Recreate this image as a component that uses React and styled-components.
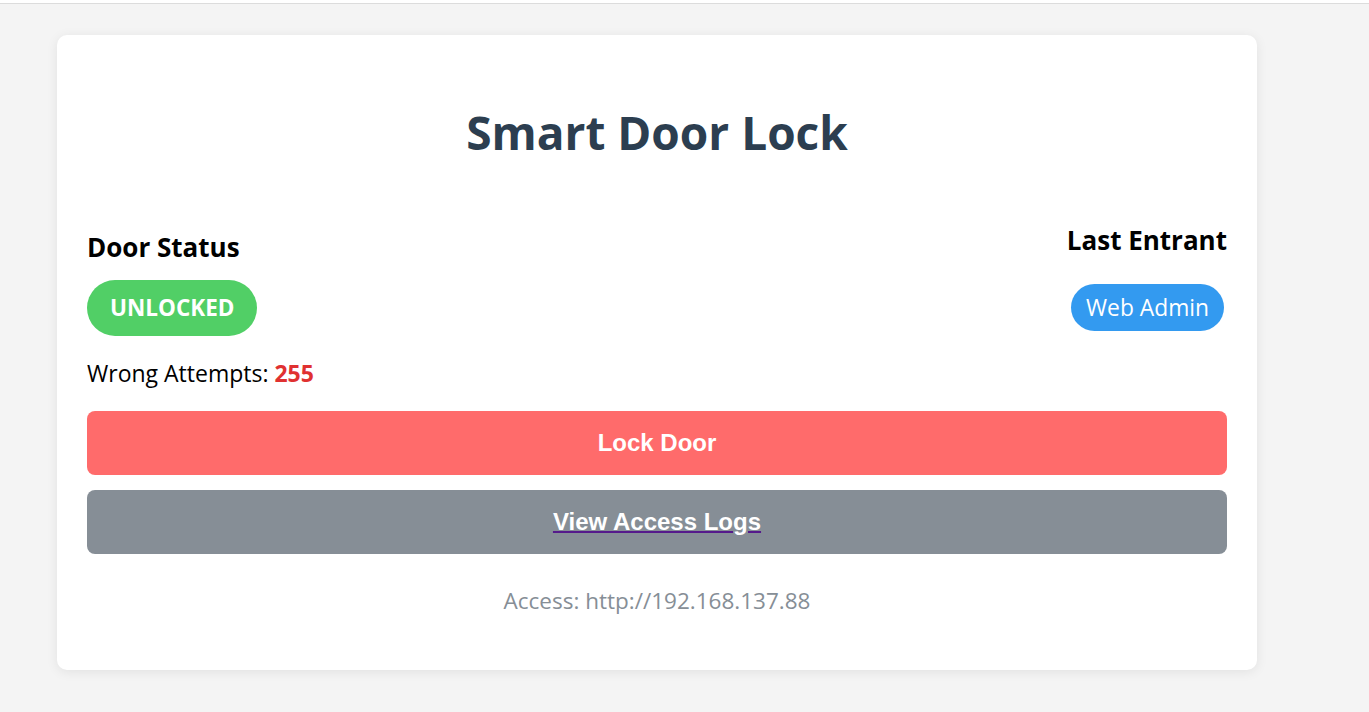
import styled, { createGlobalStyle } from "styled-components";

const GlobalStyle = createGlobalStyle`
  body {
    margin: 0;
    background: #f4f4f4;
    font-family: "Open Sans", "Noto Sans", sans-serif;
  }
`;

const App = () => {
  return (
    <>
      <GlobalStyle />
      <TopBar />
      <Page>
        <Card>
          <Title>Smart Door Lock</Title>
          <StatusRow>
            <Column>
              <Heading>Door Status</Heading>
              <StatusBadge>UNLOCKED</StatusBadge>
              <Attempts>
                Wrong Attempts: <Count>255</Count>
              </Attempts>
            </Column>
            <Column $right>
              <Heading>Last Entrant</Heading>
              <EntrantBadge>Web Admin</EntrantBadge>
            </Column>
          </StatusRow>
          <Button $bg="#ff6b6b">Lock Door</Button>
          <Button $bg="#868e96">
            <LogsLink href="#">View Access Logs</LogsLink>
          </Button>
          <Footer>Access: http://192.168.137.88</Footer>
        </Card>
      </Page>
    </>
  );
};

const TopBar = styled.div`
  height: 3px;
  background: #fff;
  border-bottom: 1px solid #dcdcdc;
`;

const Page = styled.div`
  padding: 31px 0 40px 57px;
`;

const Card = styled.div`
  width: 1200px;
  box-sizing: border-box;
  background: #fff;
  border-radius: 10px;
  padding: 30px 30px 54px;
  box-shadow: 0 2px 12px rgba(0, 0, 0, 0.08);
`;

const Title = styled.h1`
  margin: 35px 0 59px;
  text-align: center;
  color: #2c3e50;
  font-size: 46px;
  line-height: 64px;
  font-weight: 700;
`;

const StatusRow = styled.div`
  display: flex;
  justify-content: space-between;
  align-items: flex-start;
`;

const Column = styled.div`
  display: flex;
  flex-direction: column;
  align-items: ${(p) => (p.$right ? "flex-end" : "flex-start")};
  padding-top: ${(p) => (p.$right ? "0" : "7px")};
`;

const Heading = styled.h3`
  margin: 0;
  font-size: 26px;
  line-height: 34px;
  font-weight: 700;
  color: #000;
`;

const StatusBadge = styled.span`
  margin-top: 16px;
  padding: 13px 23px;
  border-radius: 30px;
  background: #51cf66;
  color: #fff;
  font-size: 22.5px;
  line-height: 30px;
  font-weight: 700;
`;

const EntrantBadge = styled.span`
  margin-top: 27px;
  margin-right: 3px;
  padding: 9px 15px;
  border-radius: 24px;
  background: #339af0;
  color: #fff;
  font-size: 22.8px;
  line-height: 29px;
`;

const Attempts = styled.p`
  margin: 21px 0 22px;
  font-size: 23px;
  line-height: 32px;
  color: #000;
`;

const Count = styled.span`
  color: #e03131;
  font-weight: 700;
`;

const Button = styled.button`
  display: block;
  width: 100%;
  margin-bottom: 15px;
  padding: 20px;
  border: none;
  border-radius: 8px;
  background: ${(p) => p.$bg};
  color: #fff;
  font-family: "Liberation Sans", Arial, sans-serif;
  font-size: 24px;
  line-height: 24px;
  font-weight: 700;
  cursor: pointer;
`;

const LogsLink = styled.a`
  color: #fff;
  text-decoration: underline;
  text-decoration-color: #551a8b;
  text-decoration-thickness: 2px;
`;

const Footer = styled.p`
  margin: 32px 0 0;
  text-align: center;
  color: #868e96;
  font-size: 22.5px;
  line-height: 30px;
`;

export default App;
